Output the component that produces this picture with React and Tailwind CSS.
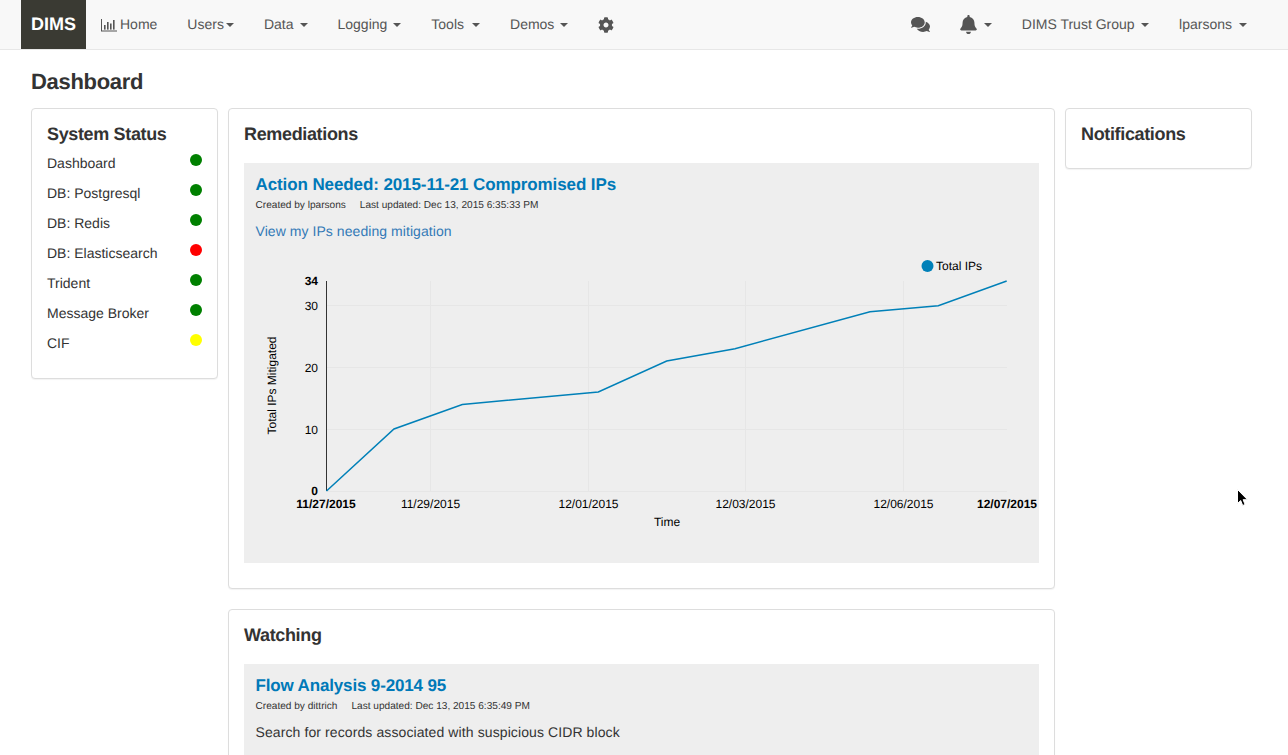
import React from 'react';
import { FaCog, FaComments, FaBell } from 'react-icons/fa';

const statuses = [
  { name: 'Dashboard', color: 'bg-[#008000]' },
  { name: 'DB: Postgresql', color: 'bg-[#008000]' },
  { name: 'DB: Redis', color: 'bg-[#008000]' },
  { name: 'DB: Elasticsearch', color: 'bg-[#ff0000]' },
  { name: 'Trident', color: 'bg-[#008000]' },
  { name: 'Message Broker', color: 'bg-[#008000]' },
  { name: 'CIF', color: 'bg-[#ffff00]' },
];

const linePoints = '326.5,491 394,429 462.3,404.5 598.3,392 666.7,361 735,348.7 870,311.7 938.3,305.7 1006.7,281';

function Caret({ className = 'ml-[6px]' }) {
  return <span className={`inline-block w-0 h-0 align-middle border-x-4 border-t-4 border-x-transparent border-t-[#555] ${className}`} />;
}

function NavItem({ children, caret = true, caretClass }) {
  return (
    <a className="flex items-center h-full px-[15px] text-[14px] text-[#555] whitespace-nowrap">
      {children}
      {caret && <Caret className={caretClass} />}
    </a>
  );
}

function BarChartIcon() {
  return (
    <svg viewBox="0 0 16 14" className="w-4 h-[14px] mr-[3px]" fill="#555">
      <path d="M0 1h1v11.6h15v1H0z" />
      <rect x="3" y="7" width="1.6" height="4.6" />
      <rect x="6" y="4" width="1.6" height="7.6" />
      <rect x="9" y="5.5" width="1.6" height="6.1" />
      <rect x="12" y="2" width="1.6" height="9.6" />
    </svg>
  );
}

function Navbar() {
  return (
    <nav className="flex items-center justify-between h-[50px] pl-[21px] pr-[26px] bg-[#f8f8f8] border-b border-[#e7e7e7]">
      <div className="flex items-center h-full">
        <a className="flex items-center h-full px-[10px] bg-[#3a3a33] text-white text-[18px] font-bold">DIMS</a>
        <NavItem caret={false}><BarChartIcon />Home</NavItem>
        <NavItem caretClass="ml-[2px]">Users</NavItem>
        <NavItem>Data</NavItem>
        <NavItem>Logging</NavItem>
        <NavItem caretClass="ml-[8px]">Tools</NavItem>
        <NavItem>Demos</NavItem>
        <NavItem caret={false}><FaCog className="w-4 h-4" /></NavItem>
      </div>
      <div className="flex items-center h-full">
        <NavItem caret={false}><FaComments className="w-[19px] h-[17px]" /></NavItem>
        <NavItem caretClass="ml-[7px]"><FaBell className="w-[17px] h-[19px]" /></NavItem>
        <NavItem caretClass="ml-[6.5px]">DIMS Trust Group</NavItem>
        <NavItem caretClass="ml-[7px]">lparsons</NavItem>
      </div>
    </nav>
  );
}

function Panel({ title, className = '', children }) {
  return (
    <section className={`bg-white border border-[#ddd] rounded-[4px] shadow-[0_1px_1px_rgba(0,0,0,0.05)] px-[15px] ${className}`}>
      <h3 className="text-[18px] leading-[20px] font-bold text-[#333] tracking-[-0.35px]">{title}</h3>
      {children}
    </section>
  );
}

function Meta({ by, updated }) {
  return (
    <p className="flex gap-[14px] text-[10.1px] leading-[14px] text-[#333] mt-[3px]">
      <span>Created by {by}</span>
      <span>Last updated: {updated}</span>
    </p>
  );
}

function Chart() {
  const ticks = [
    { y: 305.5, label: '30' },
    { y: 367.5, label: '20' },
    { y: 429.5, label: '10' },
    { y: 491.5 },
  ];
  const dates = [
    { x: 430.5, label: '11/29/2015' },
    { x: 588.5, label: '12/01/2015' },
    { x: 745.5, label: '12/03/2015' },
    { x: 903.5, label: '12/06/2015' },
  ];
  return (
    <svg width="795" height="323" className="block" style={{ fontFamily: '"Liberation Sans", Arial, sans-serif' }}>
      <g transform="translate(-244 -241)" fontSize="12" fill="#000">
        {ticks.map((t) => (
          <line key={t.y} x1="326" x2="1007" y1={t.y} y2={t.y} stroke="#e6e6e6" />
        ))}
        {dates.map((d) => (
          <line key={d.x} x1={d.x} x2={d.x} y1="281" y2="491" stroke="#e6e6e6" />
        ))}
        <line x1="326.5" x2="326.5" y1="281" y2="491" stroke="#333" />
        <polyline points={linePoints} fill="none" stroke="#0080b8" strokeWidth="1.5" />
        <text x="318" y="285" textAnchor="end" fontWeight="bold">34</text>
        {ticks.filter((t) => t.label).map((t) => (
          <text key={t.label} x="318" y={t.y + 4} textAnchor="end">{t.label}</text>
        ))}
        <text x="318" y="495" textAnchor="end" fontWeight="bold">0</text>
        <text x="326" y="508" textAnchor="middle" fontWeight="bold">11/27/2015</text>
        {dates.map((d) => (
          <text key={d.label} x={d.x} y="508" textAnchor="middle">{d.label}</text>
        ))}
        <text x="1007" y="508" textAnchor="middle" fontWeight="bold">12/07/2015</text>
        <text x="667" y="526" textAnchor="middle">Time</text>
        <text transform="translate(276 385.5) rotate(-90)" textAnchor="middle">Total IPs Mitigated</text>
        <circle cx="927.5" cy="266" r="6" fill="#0080b8" />
        <text x="936" y="270">Total IPs</text>
      </g>
    </svg>
  );
}

function Cursor() {
  return (
    <svg viewBox="0 0 14 20" className="absolute left-[1236px] top-[488px] w-[14px] h-[20px]">
      <path d="M1.5 1.5v14l3.2-3 2 5 2.4-1-2-4.8h4.4z" fill="#000" stroke="#fff" strokeWidth="1" />
    </svg>
  );
}

export default function App() {
  return (
    <div className="relative h-screen overflow-hidden bg-white text-[#333] [text-rendering:geometricPrecision] font-['Liberation_Sans',Arial,sans-serif]">
      <Navbar />
      <main className="pl-[31px] pr-[36px]">
        <h1 className="text-[22px] leading-[24px] font-bold text-[#333] mt-[20px] mb-[14px] tracking-[-0.3px]">Dashboard</h1>
        <div className="grid grid-cols-[187px_827px_187px] gap-x-[10px] items-start">
          <Panel title="System Status" className="pt-[15px] pb-[21px]">
            <ul className="mt-[3px]">
              {statuses.map((s) => (
                <li key={s.name} className="flex justify-between h-[30px] pt-[6px] text-[14px] leading-[20px] text-[#333]">
                  <span>{s.name}</span>
                  <span className={`w-3 h-3 mt-[1px] rounded-full ${s.color}`} />
                </li>
              ))}
            </ul>
          </Panel>

          <div className="flex flex-col gap-[20px]">
            <Panel title="Remediations" className="pt-[15px] pb-[25px]">
              <div className="mt-[19px] h-[400px] bg-[#eee] overflow-hidden">
                <div className="px-[11.5px] pt-[11px]">
                  <h4 className="text-[17px] leading-[22px] font-bold text-[#0079b8] tracking-[-0.1px]">Action Needed: 2015-11-21 Compromised IPs</h4>
                  <Meta by="lparsons" updated="Dec 13, 2015 6:35:33 PM" />
                  <a className="block mt-[8px] text-[14px] leading-[20px] text-[#337ab7] tracking-[0.06px]">View my IPs needing mitigation</a>
                </div>
                <Chart />
              </div>
            </Panel>

            <Panel title="Watching" className="pt-[15px] pb-[25px]">
              <div className="mt-[19px] bg-[#eee] px-[11.5px] pt-[11px] pb-[40px]">
                <h4 className="text-[17px] leading-[22px] font-bold text-[#0079b8] tracking-[-0.15px]">Flow Analysis 9-2014 95</h4>
                <Meta by="dittrich" updated="Dec 13, 2015 6:35:49 PM" />
                <p className="mt-[8px] text-[14px] leading-[20px] text-[#333] tracking-[0.1px]">Search for records associated with suspicious CIDR block</p>
              </div>
            </Panel>
          </div>

          <Panel title="Notifications" className="pt-[15px] pb-[24px]" />
        </div>
      </main>
      <Cursor />
    </div>
  );
}
